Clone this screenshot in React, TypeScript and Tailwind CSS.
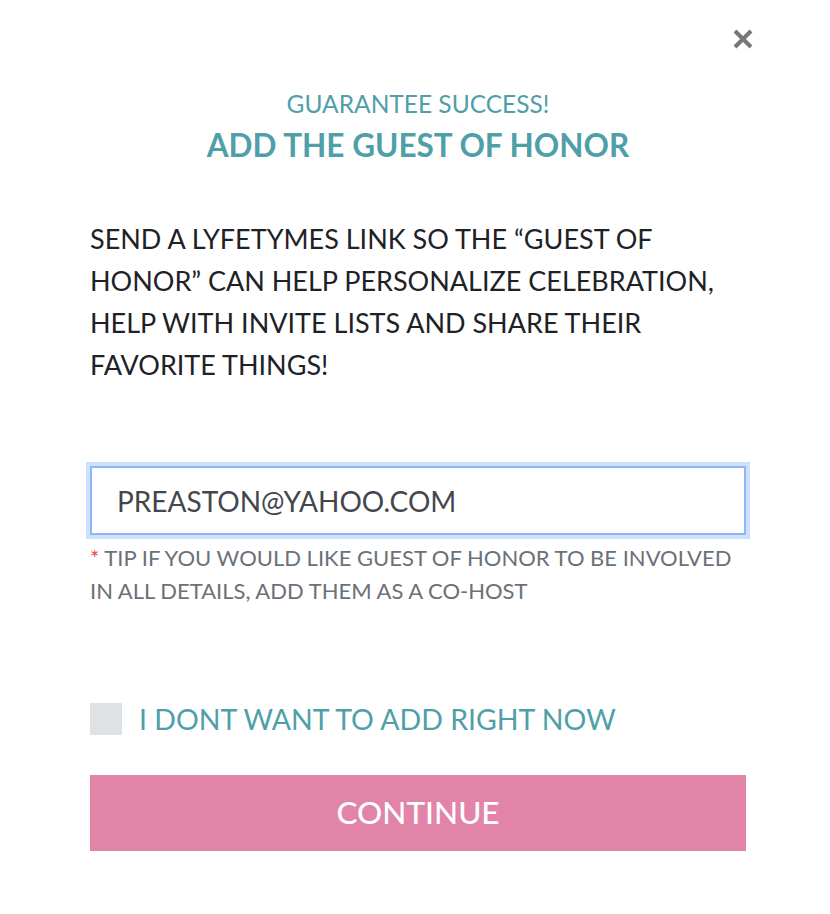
import { useState } from 'react';

export default function App() {
  const [email, setEmail] = useState('PREASTON@YAHOO.COM');
  const [skip, setSkip] = useState(false);

  return (
    <div className="min-h-[914px] w-full bg-white font-['Lato','Open_Sans',sans-serif] text-[#1e2226]">
      <div className="relative mx-auto w-[830px] pt-[89px] pb-[62px] pl-[90px] pr-[84px]">
        {/* Close */}
        <button className="absolute right-[76px] top-[28px] text-[#777] hover:text-[#444]" aria-label="Close">
          <svg width="22" height="22" viewBox="0 0 22 22" fill="none" stroke="currentColor" strokeWidth="4">
            <path d="M3 3L19 19M19 3L3 19" />
          </svg>
        </button>

        {/* Header */}
        <div className="text-center text-[#4f9fa8]">
          <p className="text-[24.5px] leading-[30px]">GUARANTEE SUCCESS!</p>
          <h2 className="mt-[6px] text-[31.5px] font-bold leading-[40px]">ADD THE GUEST OF HONOR</h2>
        </div>

        {/* Body copy */}
        <p className="mt-[53px] text-[27px] leading-[42px]">
          SEND A LYFETYMES LINK SO THE “GUEST OF
          <br />
          HONOR” CAN HELP PERSONALIZE CELEBRATION,
          <br />
          HELP WITH INVITE LISTS AND SHARE THEIR
          <br />
          FAVORITE THINGS!
        </p>

        {/* Email */}
        <div className="mt-[80px]">
          <input
            value={email}
            onChange={(e) => setEmail(e.target.value)}
            className="h-[69px] w-full border-2 border-[#8db8f5] px-[25px] text-[28px] text-[#43474d] outline-none ring-4 ring-[#cde0fc]"
          />
          <p className="mt-[6px] text-[22px] leading-[33px] text-[#6b7178]">
            <span className="text-[#e0474c]">*</span> TIP IF YOU WOULD LIKE GUEST OF HONOR TO BE INVOLVED
            <br />
            IN ALL DETAILS, ADD THEM AS A CO-HOST
          </p>
        </div>

        {/* Skip */}
        <label className="mt-[96px] flex cursor-pointer items-center gap-[17px]">
          <input type="checkbox" checked={skip} onChange={() => setSkip(!skip)} className="sr-only" />
          <span className="flex h-[32px] w-[32px] shrink-0 items-center justify-center bg-[#dee2e5]">
            {skip && (
              <svg width="20" height="20" viewBox="0 0 20 20" fill="none" stroke="#4f9fa8" strokeWidth="3">
                <path d="M4 10l4 4 8-8" />
              </svg>
            )}
          </span>
          <span className="text-[28.5px] leading-[32px] text-[#4f9fa8]">I DONT WANT TO ADD RIGHT NOW</span>
        </label>

        {/* Continue */}
        <button className="mt-[40px] h-[76px] w-full bg-[#e284a8] text-[31.5px] font-medium text-white hover:bg-[#d9769c]">
          CONTINUE
        </button>
      </div>
    </div>
  );
}
